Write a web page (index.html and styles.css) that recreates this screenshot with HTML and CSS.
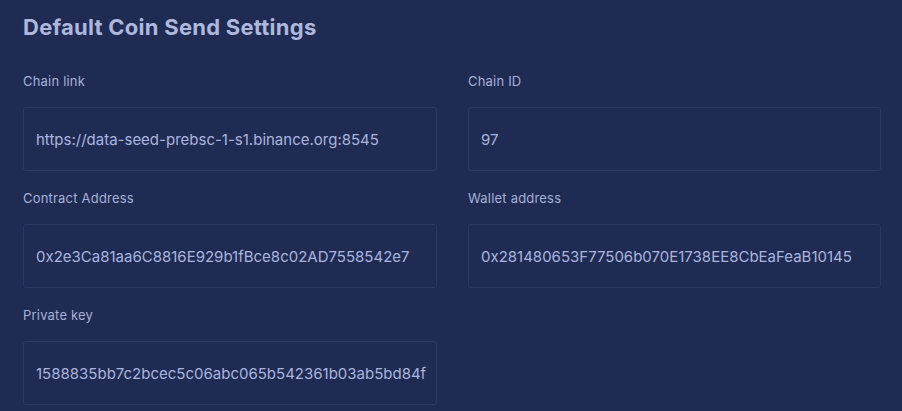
FILE: index.html
```html
<!DOCTYPE html>
<html>
<head>
<meta charset="utf-8">
<link rel="stylesheet" href="styles.css">
</head>
<body>
<div class="page">
  <h1 class="title">Default Coin Send Settings</h1>
  <div class="grid">
    <div class="field">
      <label class="label">Chain link</label>
      <div class="input">https://data-seed-prebsc-1-s1.binance.org:8545</div>
    </div>
    <div class="field">
      <label class="label">Chain ID</label>
      <div class="input">97</div>
    </div>
    <div class="field">
      <label class="label">Contract Address</label>
      <div class="input">0x2e3Ca81aa6C8816E929b1fBce8c02AD7558542e7</div>
    </div>
    <div class="field">
      <label class="label">Wallet address</label>
      <div class="input">0x281480653F77506b070E1738EE8CbEaFeaB10145</div>
    </div>
    <div class="field">
      <label class="label">Private key</label>
      <div class="input">1588835bb7c2bcec5c06abc065b542361b03ab5bd84f</div>
    </div>
  </div>
</div>
</body>
</html>
```
FILE: styles.css
```css
html, body {
  margin: 0;
  padding: 0;
  background: #202b54;
}
.page {
  padding: 11px 21px 0 23px;
  font-family: "Inter", "Open Sans", sans-serif;
}
.title {
  margin: 0;
  font-size: 22px;
  line-height: 32px;
  font-weight: 700;
  color: #aeb7dc;
  letter-spacing: 0.25px;
}
.grid {
  margin-top: 28px;
  display: grid;
  grid-template-columns: 414px 413px;
  column-gap: 31px;
  row-gap: 17px;
}
.field {
  display: flex;
  flex-direction: column;
}
.label {
  font-size: 13px;
  line-height: 20px;
  color: #a6b1d6;
  letter-spacing: 0.2px;
  margin-bottom: 16px;
}
.input {
  box-sizing: border-box;
  height: 64px;
  border: 1px solid #2b3862;
  border-radius: 3px;
  padding: 0 12px;
  display: flex;
  align-items: center;
  font-size: 15px;
  color: #a9b5df;
  white-space: nowrap;
  overflow: hidden;
}
```
